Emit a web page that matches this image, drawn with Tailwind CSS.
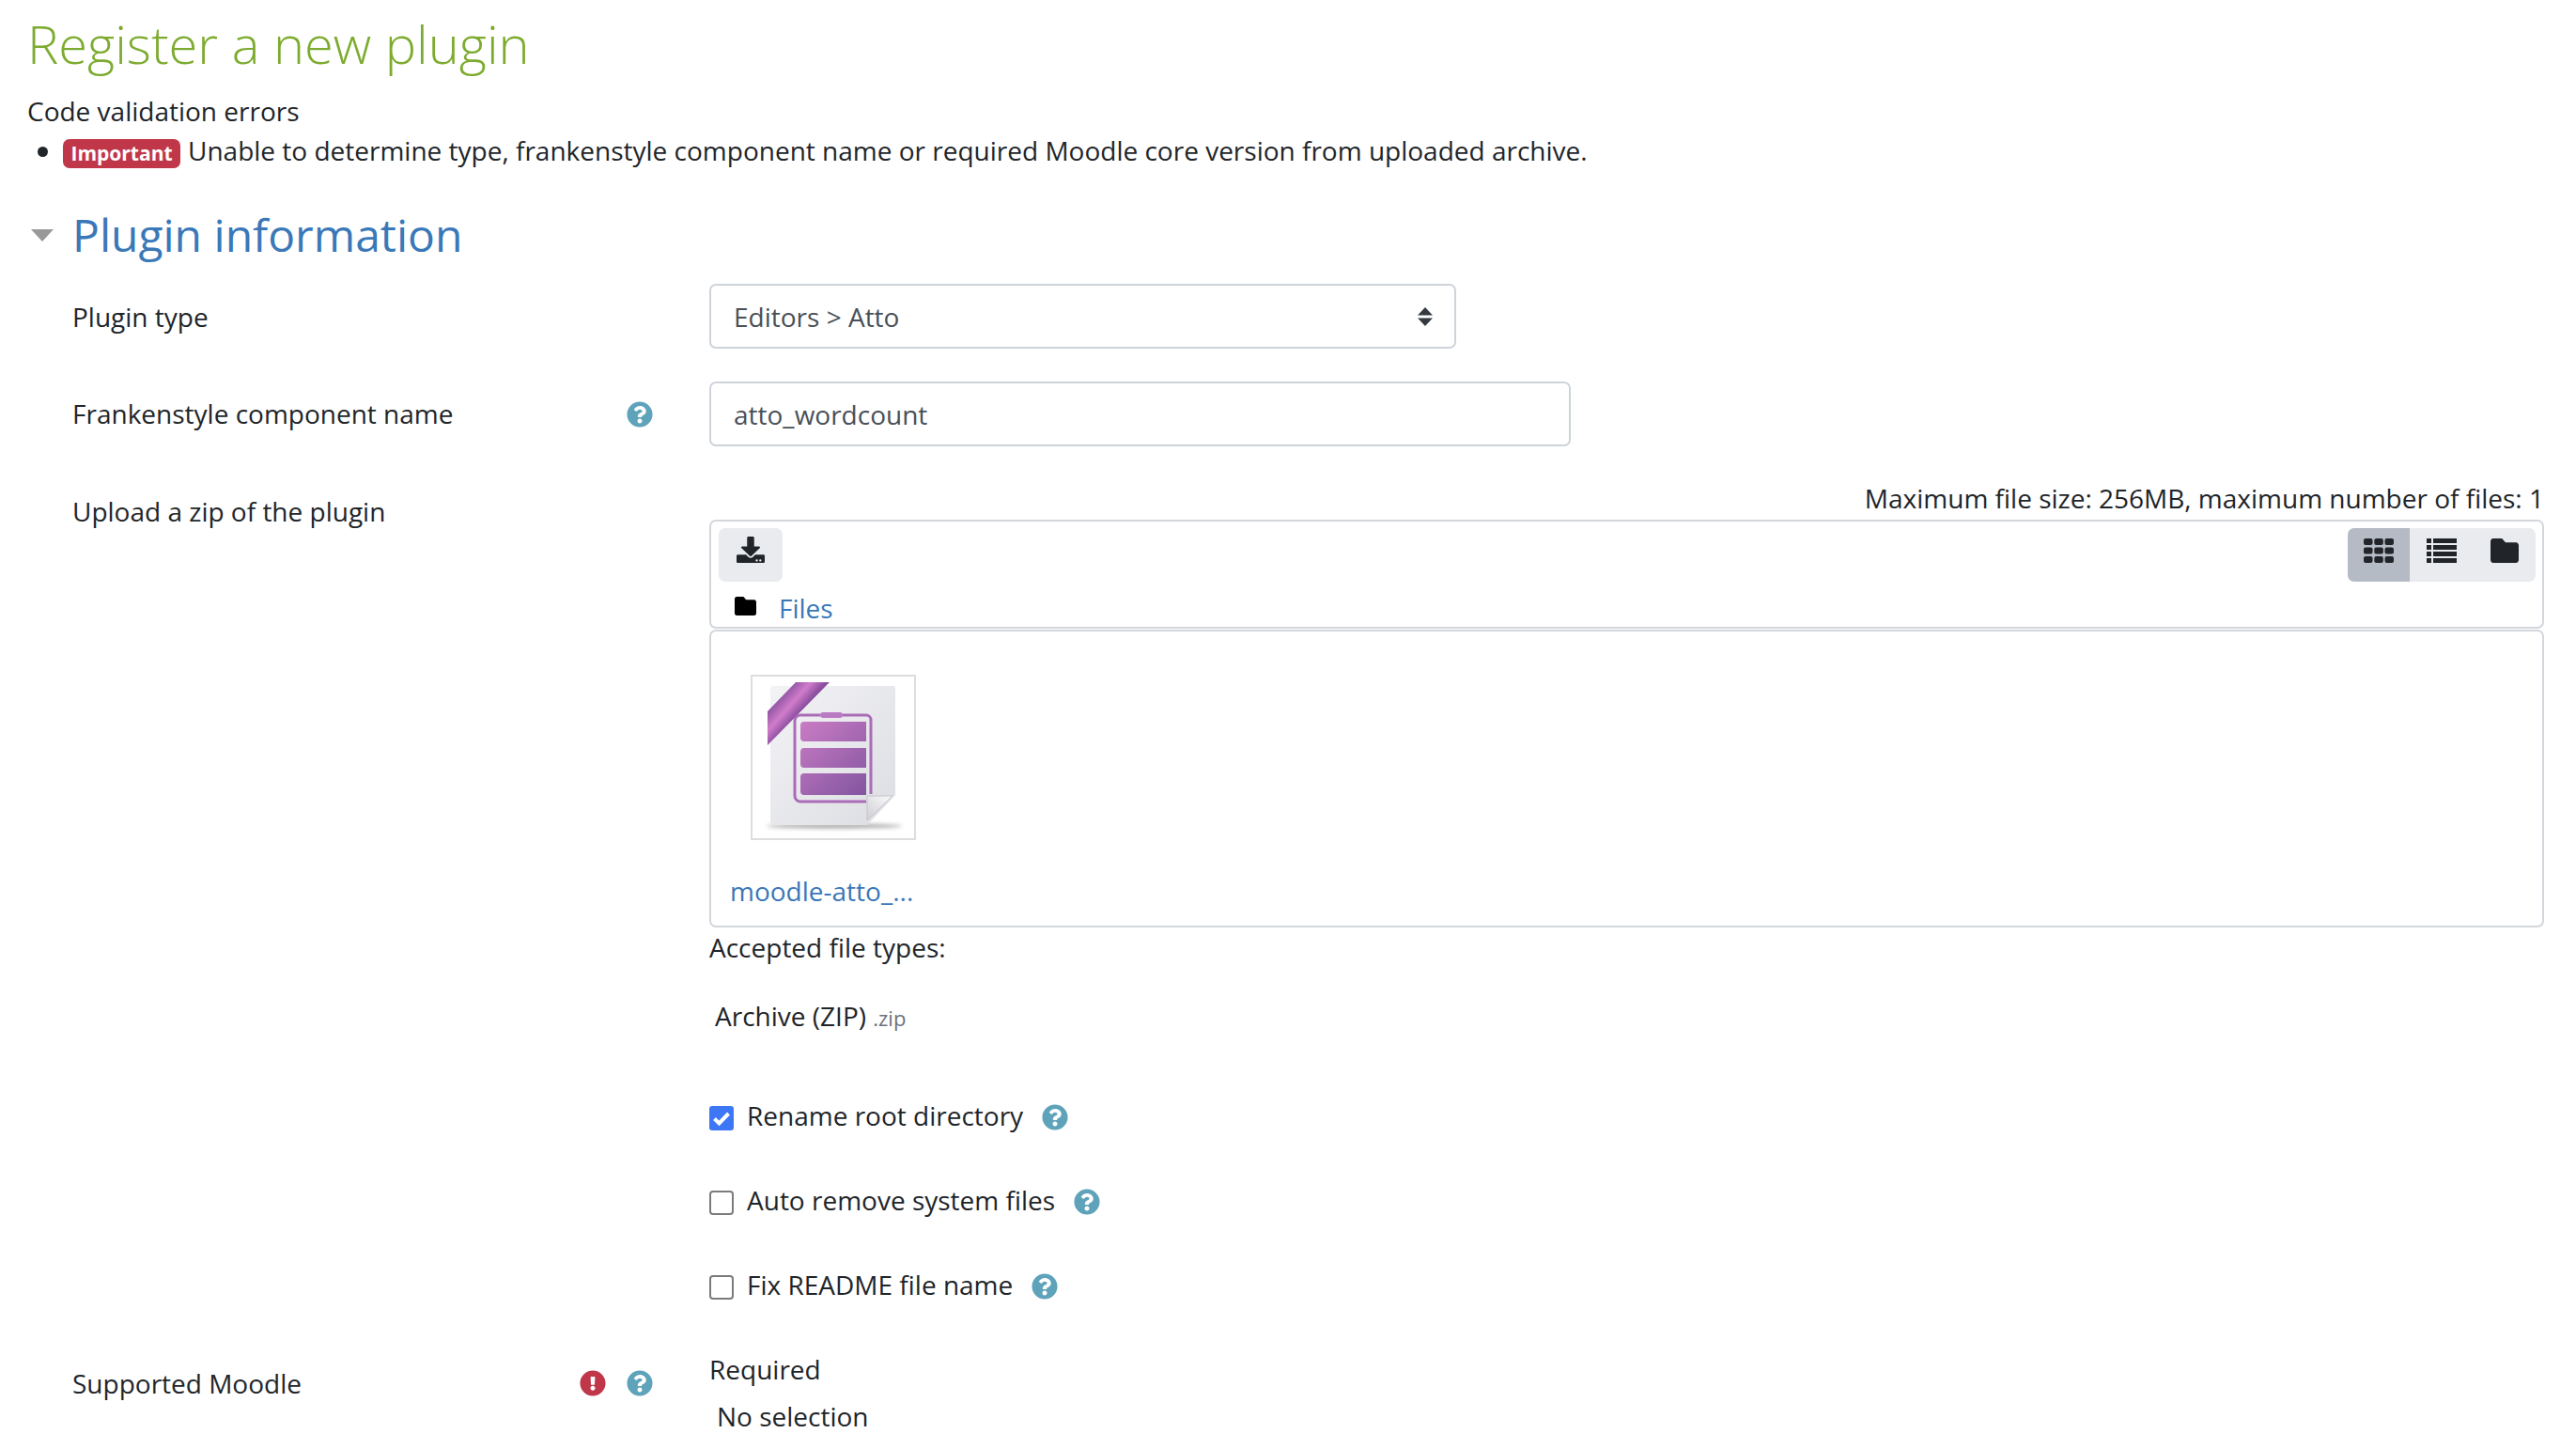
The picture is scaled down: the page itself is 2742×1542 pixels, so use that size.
<!DOCTYPE html>
<html lang="en">
<head>
    <meta charset="UTF-8">
    <title>Register a new plugin</title>
    <script src="https://cdn.jsdelivr.net/npm/@tailwindcss/browser@4"></script>
</head>
<body class="bg-white">
<div class="w-[2742px] h-[1542px] overflow-hidden pl-[29px] font-['Open_Sans',sans-serif] text-[28px] leading-[42px] text-[#212529]">

    <h1 class="h-[92px] mb-[2px] flex items-center text-[56px] font-light text-[#7dab2f]">Register a new plugin</h1>
    <div class="h-[48px] flex items-center">Code validation errors</div>
    <ul class="h-[38px] flex items-center">
        <li class="flex items-center">
            <span class="w-[11px] h-[11px] rounded-full bg-[#212529] ml-[11px] mr-[16px]"></span>
            <span class="h-[31px] w-[125px] mt-[4px] flex items-center justify-center rounded-[7px] bg-[#c1374a] text-white text-[21px] font-bold leading-none mr-[8px]">Important</span>
            <span class="-mt-[2px]">Unable to determine type, frankenstyle component name or required Moodle core version from uploaded archive.</span>
        </li>
    </ul>

    <!-- plugin information section -->
    <div class="h-[122px] pt-[18px] flex items-center">
        <svg class="w-[24px] h-[13px] ml-[4px] mr-[20px] mt-[1px]" viewBox="0 0 24 13"><path d="M0 0h24L12 13z" fill="#999999"/></svg>
        <h2 class="text-[48px] leading-none text-[#3a78b8]">Plugin information</h2>
    </div>

    <div class="flex h-[69px] items-center">
        <div class="w-[726px] pl-[48px]">Plugin type</div>
        <div class="w-[795px] h-[69px] border-2 border-[#ced4da] rounded-[7px] pl-[24px] pr-[23px] flex items-center justify-between text-[#495057]">
            Editors &gt; Atto
            <svg class="w-[16px] h-[20px]" viewBox="0 0 16 20"><path d="M8 0l8 8.500H0zM8 20l8-8.500H0z" fill="#343a40"/></svg>
        </div>
    </div>

    <div class="flex h-[69px] items-center mt-[35px]">
        <div class="w-[726px] pl-[48px] flex items-center">
            <span class="w-[590px] -mt-[2px]">Frankenstyle component name</span>
            <svg class="w-[28px] h-[28px] fill-[#5ea3ba]" viewBox="0 0 512 512"><path d="M504 256c0 136.997-111.043 248-248 248S8 392.997 8 256C8 119.083 119.043 8 256 8s248 111.083 248 248zM262.655 90c-54.497 0-89.255 22.957-116.549 63.758-3.536 5.286-2.353 12.415 2.715 16.258l34.699 26.310c5.205 3.947 12.621 3.008 16.665-2.122 17.864-22.658 30.113-35.797 57.303-35.797 20.429 0 45.698 13.148 45.698 32.958 0 14.976-12.363 22.667-32.534 33.976C247.128 238.528 216 254.941 216 296v4c0 6.627 5.373 12 12 12h56c6.627 0 12-5.373 12-12v-1.333c0-28.462 83.186-29.647 83.186-106.667 0-58.002-60.165-102-116.531-102zM256 338c-25.365 0-46 20.635-46 46 0 25.364 20.635 46 46 46s46-20.636 46-46c0-25.365-20.635-46-46-46z"/></svg>
        </div>
        <div class="w-[917px] h-[69px] border-2 border-[#ced4da] rounded-[7px] pl-[24px] flex items-center text-[#495057]">atto_wordcount</div>
    </div>

    <!-- upload row -->
    <div class="flex mt-[36px]">
        <div class="w-[726px] pl-[48px] pt-[12px]">Upload a zip of the plugin</div>
        <div class="w-[1953px]">
            <div class="h-[40px] leading-[38px] mb-[2px] text-right pr-[0px]">Maximum file size: 256MB, maximum number of files: 1</div>

            <div class="h-[116px] border-2 border-[#d3d6db] rounded-[7px] pl-[8px] pr-[7px] pt-[7px]">
                <div class="flex justify-between">
                    <div class="w-[68px] h-[57px] rounded-[7px] bg-[#e9ebef] flex items-center justify-center">
                        <svg class="w-[30px] h-[28px] -mt-[11px] fill-[#212529]" viewBox="0 0 512 512" preserveAspectRatio="none"><path d="M216 0h80c13.300 0 24 10.700 24 24v168h87.700c17.800 0 26.700 21.500 14.100 34.100L269.700 378.300c-7.500 7.500-19.800 7.500-27.300 0L90.100 226.100c-12.600-12.600-3.700-34.100 14.100-34.100H192V24c0-13.300 10.700-24 24-24zm296 376v112c0 13.300-10.700 24-24 24H24c-13.300 0-24-10.700-24-24V376c0-13.300 10.700-24 24-24h146.700l49 49c20.100 20.100 52.500 20.100 72.600 0l49-49H488c13.300 0 24 10.700 24 24zm-124 88c0-11-9-20-20-20s-20 9-20 20 9 20 20 20 20-9 20-20zm64 0c0-11-9-20-20-20s-20 9-20 20 9 20 20 20 20-9 20-20z"/></svg>
                    </div>
                    <div class="w-[200px] h-[57px] rounded-[7px] bg-[#e9ebef] flex overflow-hidden">
                        <div class="w-[66px] bg-[#b5bbc5] flex items-center justify-center">
                            <svg class="w-[32px] h-[26px] -mt-[9px] fill-[#212529]" viewBox="0 0 32 26"><rect width="9.500" height="7" rx="2"/><rect x="11.300" width="9.500" height="7" rx="2"/><rect x="22.500" width="9.500" height="7" rx="2"/><rect y="9.500" width="9.500" height="7" rx="2"/><rect x="11.300" y="9.500" width="9.500" height="7" rx="2"/><rect x="22.500" y="9.500" width="9.500" height="7" rx="2"/><rect y="19" width="9.500" height="7" rx="2"/><rect x="11.300" y="19" width="9.500" height="7" rx="2"/><rect x="22.500" y="19" width="9.500" height="7" rx="2"/></svg>
                        </div>
                        <div class="w-[67px] flex items-center justify-center">
                            <svg class="w-[32px] h-[26px] -mt-[9px] fill-[#212529]" viewBox="0 0 32 26"><rect width="5" height="5"/><rect x="7" width="25" height="5"/><rect y="7" width="5" height="5"/><rect x="7" y="7" width="25" height="5"/><rect y="14" width="5" height="5"/><rect x="7" y="14" width="25" height="5"/><rect y="21" width="5" height="5"/><rect x="7" y="21" width="25" height="5"/></svg>
                        </div>
                        <div class="w-[67px] flex items-center justify-center">
                            <svg class="w-[30px] h-[26px] -mt-[9px] fill-[#212529]" viewBox="0 64 512 384" preserveAspectRatio="none"><path d="M464 128H272l-64-64H48C21.490 64 0 85.490 0 112v288c0 26.510 21.490 48 48 48h416c26.510 0 48-21.490 48-48V176c0-26.510-21.490-48-48-48z"/></svg>
                        </div>
                    </div>
                </div>
                <div class="flex items-center h-[42px] mt-[7px]">
                    <svg class="w-[23px] h-[20px] ml-[17px] mr-[24px] -mt-[4px] fill-black" viewBox="0 64 512 384" preserveAspectRatio="none"><path d="M464 128H272l-64-64H48C21.490 64 0 85.490 0 112v288c0 26.510 21.490 48 48 48h416c26.510 0 48-21.490 48-48V176c0-26.510-21.490-48-48-48z"/></svg>
                    <span class="text-[#3a78b8]">Files</span>
                </div>
            </div>

            <div class="h-[317px] mt-[1px] border-2 border-[#d3d6db] rounded-[7px] pl-[42px] pt-[46px]">
                <div class="w-[176px] h-[176px] border-2 border-[#dddddd] flex items-center justify-center">
                    <svg class="w-[160px] h-[160px]" viewBox="0 0 160 160">
                        <defs>
                            <linearGradient id="page" x1="0" y1="0" x2="1" y2="1"><stop offset="0" stop-color="#f3f3f6"/><stop offset="1" stop-color="#dcdde2"/></linearGradient>
                            <linearGradient id="band" gradientUnits="userSpaceOnUse" x1="45" y1="42" x2="115" y2="120"><stop offset="0" stop-color="#c97cc4"/><stop offset="1" stop-color="#8355a0"/></linearGradient>
                            <linearGradient id="ribbon" gradientUnits="userSpaceOnUse" x1="25" y1="17" x2="43" y2="33"><stop offset="0" stop-color="#9a5aa8"/><stop offset="0.5" stop-color="#d07ccb"/><stop offset="1" stop-color="#8b4f9e"/></linearGradient>
                            <linearGradient id="fold" x1="0" y1="1" x2="1" y2="0"><stop offset="0" stop-color="#cfcfd4"/><stop offset="1" stop-color="#fbfbfb"/></linearGradient>
                            <filter id="soft" x="-10%" y="-10%" width="120%" height="120%"><feGaussianBlur stdDeviation="0.700"/></filter>
                            <filter id="shadow" x="-10%" y="-200%" width="120%" height="500%"><feGaussianBlur stdDeviation="2"/></filter>
                        </defs>
                        <ellipse cx="81" cy="153" rx="72" ry="2.500" fill="#a8a8a8" filter="url(#shadow)"/>
                        <g filter="url(#soft)">
                            <path d="M16 4h127a3 3 0 0 1 3 3v113l-30 32H17a4 4 0 0 1-4-4V7a3 3 0 0 1 3-3z" fill="url(#page)"/>
                            <path d="M116 147v-26h27z" fill="url(#fold)" stroke="#c4c4c9"/>
                            <path d="M40 0h36L10 67V31z" fill="url(#ribbon)"/>
                            <path d="M66 35H45a6 6 0 0 0-6 6v80a6 6 0 0 0 6 6h70M90 35h25a5 5 0 0 1 5 5v79" fill="none" stroke="#aa6cb7" stroke-width="3"/>
                            <rect x="66" y="32" width="24" height="6" rx="3" fill="#bb7ac2"/>
                            <path d="M49 42h66v21H49a4 4 0 0 1-4-4V46a4 4 0 0 1 4-4zM49 70h66v21H49a4 4 0 0 1-4-4V74a4 4 0 0 1 4-4zM49 97h66v23H49a4 4 0 0 1-4-4v-15a4 4 0 0 1 4-4z" fill="url(#band)"/>
                        </g>
                    </svg>
                </div>
                <div class="mt-[33px] -ml-[22px] text-[#3a78b8]">moodle-atto_...</div>
            </div>

            <div>Accepted file types:</div>
            <div class="mt-[31px] ml-[6px]">Archive (ZIP) <span class="text-[22px] text-[#6a737b]">.zip</span></div>

            <!-- checkboxes -->
            <div class="flex items-center mt-[65px] h-[42px]">
                <svg class="w-[26px] h-[26px]" viewBox="0 0 26 26"><rect width="26" height="26" rx="3" fill="#3e77f5"/><path d="M5.500 13.500l5 5L20.500 8" fill="none" stroke="#ffffff" stroke-width="4"/></svg>
                <span class="ml-[14px] mr-[20px] -mt-[6px]">Rename root directory</span>
                <svg class="w-[28px] h-[28px] -mt-[3px] fill-[#5ea3ba]" viewBox="0 0 512 512"><path d="M504 256c0 136.997-111.043 248-248 248S8 392.997 8 256C8 119.083 119.043 8 256 8s248 111.083 248 248zM262.655 90c-54.497 0-89.255 22.957-116.549 63.758-3.536 5.286-2.353 12.415 2.715 16.258l34.699 26.310c5.205 3.947 12.621 3.008 16.665-2.122 17.864-22.658 30.113-35.797 57.303-35.797 20.429 0 45.698 13.148 45.698 32.958 0 14.976-12.363 22.667-32.534 33.976C247.128 238.528 216 254.941 216 296v4c0 6.627 5.373 12 12 12h56c6.627 0 12-5.373 12-12v-1.333c0-28.462 83.186-29.647 83.186-106.667 0-58.002-60.165-102-116.531-102zM256 338c-25.365 0-46 20.635-46 46 0 25.364 20.635 46 46 46s46-20.636 46-46c0-25.365-20.635-46-46-46z"/></svg>
            </div>
            <div class="flex items-center mt-[48px] h-[42px]">
                <span class="w-[26px] h-[26px] border-2 border-[#7b7b7b] rounded-[4px]"></span>
                <span class="ml-[14px] mr-[20px] -mt-[6px]">Auto remove system files</span>
                <svg class="w-[28px] h-[28px] -mt-[3px] fill-[#5ea3ba]" viewBox="0 0 512 512"><path d="M504 256c0 136.997-111.043 248-248 248S8 392.997 8 256C8 119.083 119.043 8 256 8s248 111.083 248 248zM262.655 90c-54.497 0-89.255 22.957-116.549 63.758-3.536 5.286-2.353 12.415 2.715 16.258l34.699 26.310c5.205 3.947 12.621 3.008 16.665-2.122 17.864-22.658 30.113-35.797 57.303-35.797 20.429 0 45.698 13.148 45.698 32.958 0 14.976-12.363 22.667-32.534 33.976C247.128 238.528 216 254.941 216 296v4c0 6.627 5.373 12 12 12h56c6.627 0 12-5.373 12-12v-1.333c0-28.462 83.186-29.647 83.186-106.667 0-58.002-60.165-102-116.531-102zM256 338c-25.365 0-46 20.635-46 46 0 25.364 20.635 46 46 46s46-20.636 46-46c0-25.365-20.635-46-46-46z"/></svg>
            </div>
            <div class="flex items-center mt-[48px] h-[42px]">
                <span class="w-[26px] h-[26px] border-2 border-[#7b7b7b] rounded-[4px]"></span>
                <span class="ml-[14px] mr-[20px] -mt-[6px]">Fix README file name</span>
                <svg class="w-[28px] h-[28px] -mt-[3px] fill-[#5ea3ba]" viewBox="0 0 512 512"><path d="M504 256c0 136.997-111.043 248-248 248S8 392.997 8 256C8 119.083 119.043 8 256 8s248 111.083 248 248zM262.655 90c-54.497 0-89.255 22.957-116.549 63.758-3.536 5.286-2.353 12.415 2.715 16.258l34.699 26.310c5.205 3.947 12.621 3.008 16.665-2.122 17.864-22.658 30.113-35.797 57.303-35.797 20.429 0 45.698 13.148 45.698 32.958 0 14.976-12.363 22.667-32.534 33.976C247.128 238.528 216 254.941 216 296v4c0 6.627 5.373 12 12 12h56c6.627 0 12-5.373 12-12v-1.333c0-28.462 83.186-29.647 83.186-106.667 0-58.002-60.165-102-116.531-102zM256 338c-25.365 0-46 20.635-46 46 0 25.364 20.635 46 46 46s46-20.636 46-46c0-25.365-20.635-46-46-46z"/></svg>
            </div>
        </div>
    </div>

    <!-- supported moodle -->
    <div class="flex mt-[45px]">
        <div class="w-[726px] pl-[48px] flex items-center h-[42px] mt-[15px]">
            <span class="w-[540px] -mt-[1px]">Supported Moodle</span>
            <svg class="w-[28px] h-[28px] fill-[#c1374a] mr-[22px]" viewBox="0 0 512 512"><path d="M504 256c0 136.997-111.043 248-248 248S8 392.997 8 256C8 119.083 119.043 8 256 8s248 111.083 248 248zm-248 50c-25.405 0-46 20.595-46 46s20.595 46 46 46 46-20.595 46-46-20.595-46-46-46zm-43.673-165.346l7.418 136c.347 6.364 5.609 11.346 11.982 11.346h48.546c6.373 0 11.635-4.982 11.982-11.346l7.418-136c.375-6.874-5.098-12.654-11.982-12.654h-63.383c-6.884 0-12.356 5.780-11.981 12.654z"/></svg>
            <svg class="w-[28px] h-[28px] fill-[#5ea3ba]" viewBox="0 0 512 512"><path d="M504 256c0 136.997-111.043 248-248 248S8 392.997 8 256C8 119.083 119.043 8 256 8s248 111.083 248 248zM262.655 90c-54.497 0-89.255 22.957-116.549 63.758-3.536 5.286-2.353 12.415 2.715 16.258l34.699 26.310c5.205 3.947 12.621 3.008 16.665-2.122 17.864-22.658 30.113-35.797 57.303-35.797 20.429 0 45.698 13.148 45.698 32.958 0 14.976-12.363 22.667-32.534 33.976C247.128 238.528 216 254.941 216 296v4c0 6.627 5.373 12 12 12h56c6.627 0 12-5.373 12-12v-1.333c0-28.462 83.186-29.647 83.186-106.667 0-58.002-60.165-102-116.531-102zM256 338c-25.365 0-46 20.635-46 46 0 25.364 20.635 46 46 46s46-20.636 46-46c0-25.365-20.635-46-46-46z"/></svg>
        </div>
        <div>
            <div>Required</div>
            <div class="mt-[8px] ml-[8px]">No selection</div>
        </div>
    </div>
</div>
</body>
</html>
